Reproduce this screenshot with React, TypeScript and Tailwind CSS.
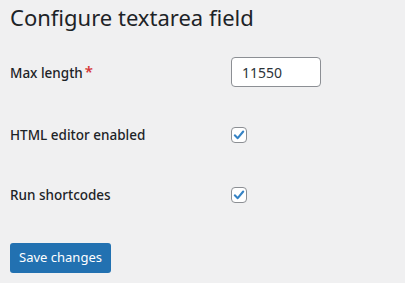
function CheckBox() {
  return (
    <span className="flex h-4 w-4 items-center justify-center rounded-[4px] border border-[#8c8f94] bg-white">
      <svg viewBox="0 0 20 20" className="h-[16px] w-[16px]">
        <path d="M4 10.5 L8.2 14.5 L16 5" fill="none" stroke="#3582c4" strokeWidth="3" strokeLinecap="round" strokeLinejoin="round" />
      </svg>
    </span>
  );
}

function Row({ label, required, children, className }: { label: string; required?: boolean; children: React.ReactNode; className?: string }) {
  return (
    <div className={`flex h-[60px] items-center ${className ?? ''}`}>
      <div className="w-[221px] pt-[1px] text-[13.5px] font-medium text-[#1d2327]">
        {label}
        {required && <span className="relative -top-[1px] ml-[2px] text-[15px] font-semibold text-[#d63638]">*</span>}
      </div>
      {children}
    </div>
  );
}

export default function App() {
  return (
    <div className="min-h-[283px] bg-[#f0f0f1] pl-[10px] font-['Noto_Sans','Open_Sans',sans-serif] text-[#1d2327]">
      <h1 className="pt-[3px] text-[22px] leading-[29px] font-normal">Configure textarea field</h1>
      <form className="flex flex-col">
        <Row label="Max length" required className="mt-[10px]">
          <input
            type="text"
            defaultValue="11550"
            className="h-[30px] w-[90px] rounded-[4px] border border-[#8c8f94] bg-white px-[10px] text-[14px] text-[#2c3338] outline-none"
          />
        </Row>
        <Row label="HTML editor enabled" className="mt-[3px]">
          <CheckBox />
        </Row>
        <Row label="Run shortcodes">
          <CheckBox />
        </Row>
        <div className="mt-[18px]">
          <button
            type="button"
            className="h-[30px] w-[101px] rounded-[3px] bg-[#2271b1] text-[13px] text-white"
          >
            Save changes
          </button>
        </div>
      </form>
    </div>
  );
}
